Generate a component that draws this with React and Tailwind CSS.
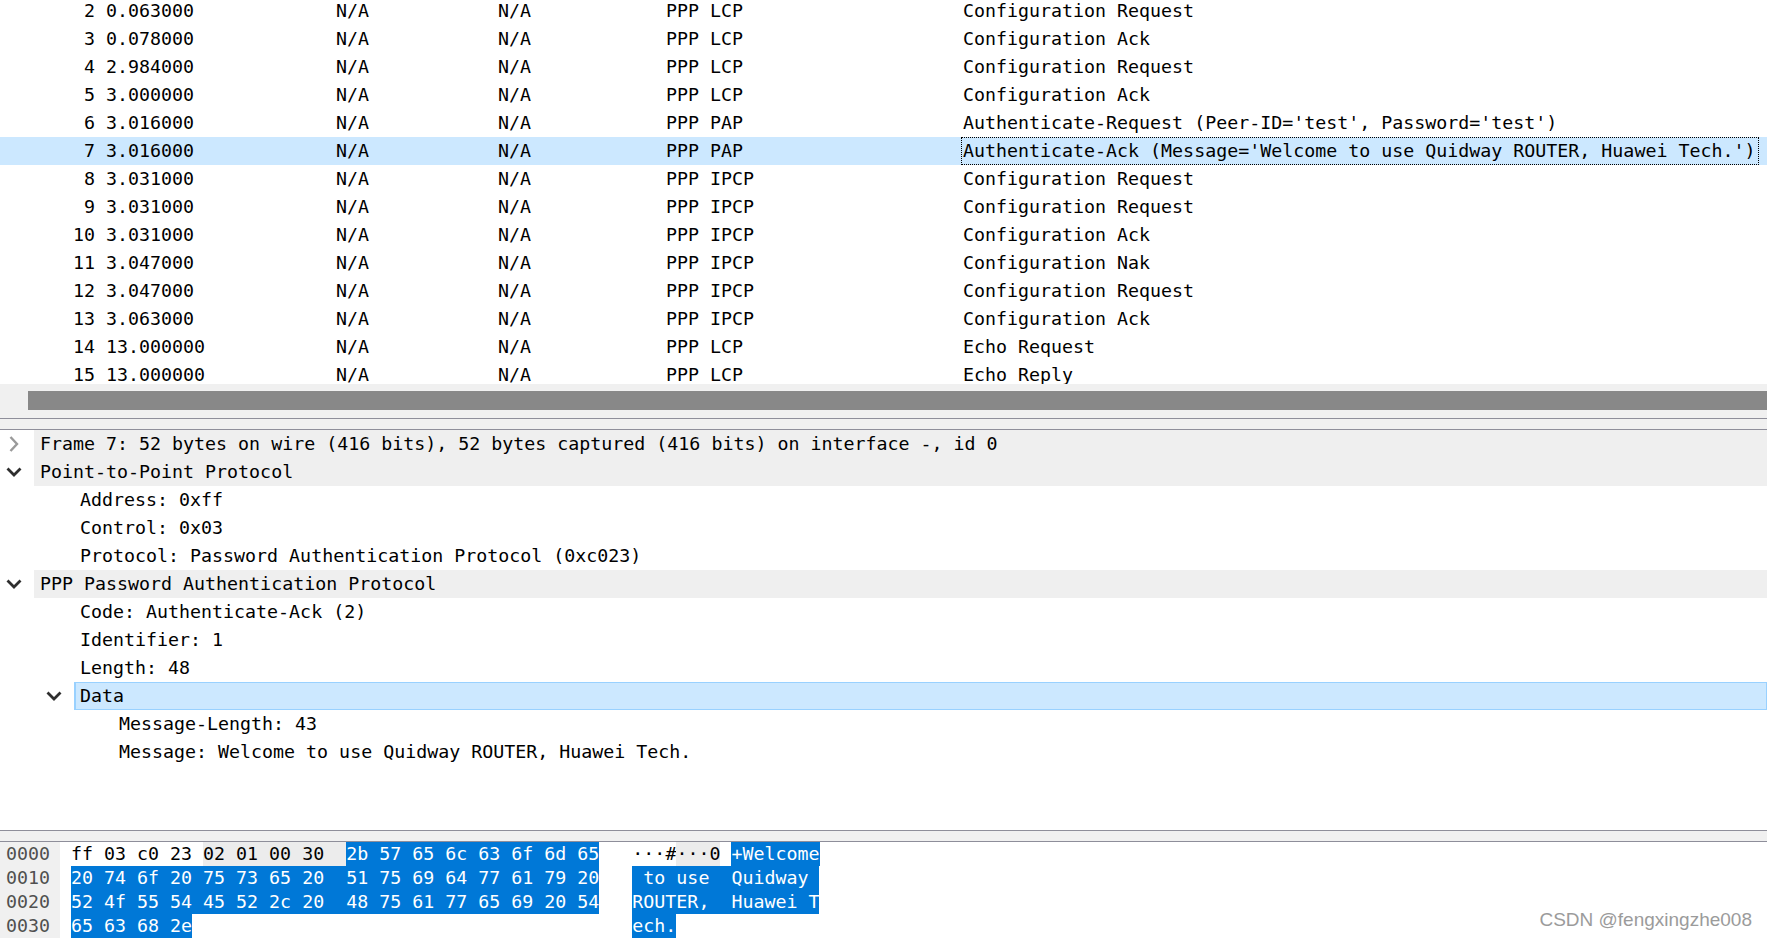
import React from "react";

const packets = [
  [2, "0.063000", "PPP LCP", "Configuration Request"],
  [3, "0.078000", "PPP LCP", "Configuration Ack"],
  [4, "2.984000", "PPP LCP", "Configuration Request"],
  [5, "3.000000", "PPP LCP", "Configuration Ack"],
  [6, "3.016000", "PPP PAP", "Authenticate-Request (Peer-ID='test', Password='test')"],
  [7, "3.016000", "PPP PAP", "Authenticate-Ack (Message='Welcome to use Quidway ROUTER, Huawei Tech.')"],
  [8, "3.031000", "PPP IPCP", "Configuration Request"],
  [9, "3.031000", "PPP IPCP", "Configuration Request"],
  [10, "3.031000", "PPP IPCP", "Configuration Ack"],
  [11, "3.047000", "PPP IPCP", "Configuration Nak"],
  [12, "3.047000", "PPP IPCP", "Configuration Request"],
  [13, "3.063000", "PPP IPCP", "Configuration Ack"],
  [14, "13.000000", "PPP LCP", "Echo Request"],
  [15, "13.000000", "PPP LCP", "Echo Reply"],
];

function PacketRow({ no, time, proto, info }) {
  const sel = no === 7;
  return (
    <div className={`h-[28px] flex items-center whitespace-pre ${sel ? "bg-[#cce8ff]" : ""}`}>
      <div className="w-[95px] text-right">{no}</div>
      <div className="w-[241px] pl-[11px]">{time}</div>
      <div className="w-[162px]">N/A</div>
      <div className="w-[168px]">N/A</div>
      <div className="w-[295px]">{proto}</div>
      <div
        className={`h-full flex items-center pl-[1px] pr-[3px] border border-dotted ${
          sel ? "border-black" : "border-transparent"
        }`}
      >
        {info}
      </div>
    </div>
  );
}

function ChevRight() {
  return (
    <svg width="10" height="16" viewBox="0 0 10 16" className="block">
      <polyline points="1.5,1 8,8 1.5,15" fill="none" stroke="#9a9a9a" strokeWidth="2.4" />
    </svg>
  );
}

function ChevDown() {
  return (
    <svg width="16" height="10" viewBox="0 0 16 10" className="block">
      <polyline points="1.5,1.5 8,8 14.5,1.5" fill="none" stroke="#2e2e2e" strokeWidth="2.8" />
    </svg>
  );
}

function HeaderRow({ open, children }) {
  return (
    <div className="h-[28px] flex">
      <div className={`w-[34px] flex items-center ${open ? "pl-[6px]" : "pl-[9px]"}`}>
        {open ? <ChevDown /> : <ChevRight />}
      </div>
      <div className="flex-1 bg-[#efefef] flex items-center pl-[6px] whitespace-pre">{children}</div>
    </div>
  );
}

function ChildRow({ pl, children }) {
  return <div className={`h-[28px] flex items-center whitespace-pre ${pl}`}>{children}</div>;
}

const W = "";
const G = "bg-[#ececec]";
const B = "bg-[#0078d7] text-white";

const hexRows = [
  [
    "0000",
    [
      ["ff 03 c0 23 ", W],
      ["02 01 00 30  ", G],
      ["2b 57 65 6c 63 6f 6d 65", B],
      ["   ", W],
      ["···#", W],
      ["···0", G],
      [" ", W],
      ["+Welcome", B],
    ],
  ],
  [
    "0010",
    [
      ["20 74 6f 20 75 73 65 20  51 75 69 64 77 61 79 20", B],
      ["   ", W],
      [" to use  Quidway ", B],
    ],
  ],
  [
    "0020",
    [
      ["52 4f 55 54 45 52 2c 20  48 75 61 77 65 69 20 54", B],
      ["   ", W],
      ["ROUTER,  Huawei T", B],
    ],
  ],
  [
    "0030",
    [
      ["65 63 68 2e", B],
      ["                                        ", W],
      ["ech.", B],
    ],
  ],
];

export default function App() {
  return (
    <div className="w-[1767px] h-[939px] overflow-hidden bg-white relative font-['DejaVu_Sans_Mono',monospace] text-[18.3px] leading-none text-black">
      {/* Packet list */}
      <div className="h-[384px] overflow-hidden">
        <div className="-mt-[3px]">
          {packets.map(([no, time, proto, info]) => (
            <PacketRow key={no} no={no} time={time} proto={proto} info={info} />
          ))}
        </div>
      </div>
      {/* horizontal scrollbar */}
      <div className="h-[34px] bg-[#f0f0f0] pt-[7px] pl-[28px]">
        <div className="h-[19px] bg-[#888888]" />
      </div>
      <div className="h-px bg-[#8e8e9a]" />
      <div className="h-[10px] bg-[#f0f0f0]" />
      <div className="h-px bg-[#8e8e9a]" />

      {/* Packet details */}
      <div className="h-[400px] overflow-hidden">
        <HeaderRow open={false}>
          Frame 7: 52 bytes on wire (416 bits), 52 bytes captured (416 bits) on interface -, id 0
        </HeaderRow>
        <HeaderRow open>Point-to-Point Protocol</HeaderRow>
        <ChildRow pl="pl-[80px]">Address: 0xff</ChildRow>
        <ChildRow pl="pl-[80px]">Control: 0x03</ChildRow>
        <ChildRow pl="pl-[80px]">Protocol: Password Authentication Protocol (0xc023)</ChildRow>
        <HeaderRow open>PPP Password Authentication Protocol</HeaderRow>
        <ChildRow pl="pl-[80px]">Code: Authenticate-Ack (2)</ChildRow>
        <ChildRow pl="pl-[80px]">Identifier: 1</ChildRow>
        <ChildRow pl="pl-[80px]">Length: 48</ChildRow>
        <div className="h-[28px] flex">
          <div className="w-[74px] flex items-center pl-[46px]">
            <ChevDown />
          </div>
          <div className="flex-1 bg-[#cce8ff] border border-[#99d1ff] border-l-2 flex items-center pl-[4px]">
            Data
          </div>
        </div>
        <ChildRow pl="pl-[119px]">Message-Length: 43</ChildRow>
        <ChildRow pl="pl-[119px]">Message: Welcome to use Quidway ROUTER, Huawei Tech.</ChildRow>
      </div>

      <div className="h-px bg-[#8e8e9a]" />
      <div className="h-[10px] bg-[#f0f0f0]" />
      <div className="h-px bg-[#8e8e9a]" />

      {/* Bytes pane */}
      <div>
        {hexRows.map(([off, parts]) => (
          <div key={off} className="h-[24px] flex">
            <div className="w-[60px] bg-[#f0f0f0] text-[#505050] pl-[6px] flex items-center">{off}</div>
            <div className="pl-[11px] whitespace-pre leading-[24px]">
              {parts.map(([t, c], i) => (
                <span key={i} className={`inline-block h-[24px] leading-[24px] whitespace-pre align-top ${c}`}>
                  {t}
                </span>
              ))}
            </div>
          </div>
        ))}
      </div>

      <div className="absolute right-[15px] bottom-[8px] font-['Liberation_Sans',sans-serif] text-[19px] leading-[22px] text-[#9b9b9b]">
        CSDN @fengxingzhe008
      </div>
    </div>
  );
}
